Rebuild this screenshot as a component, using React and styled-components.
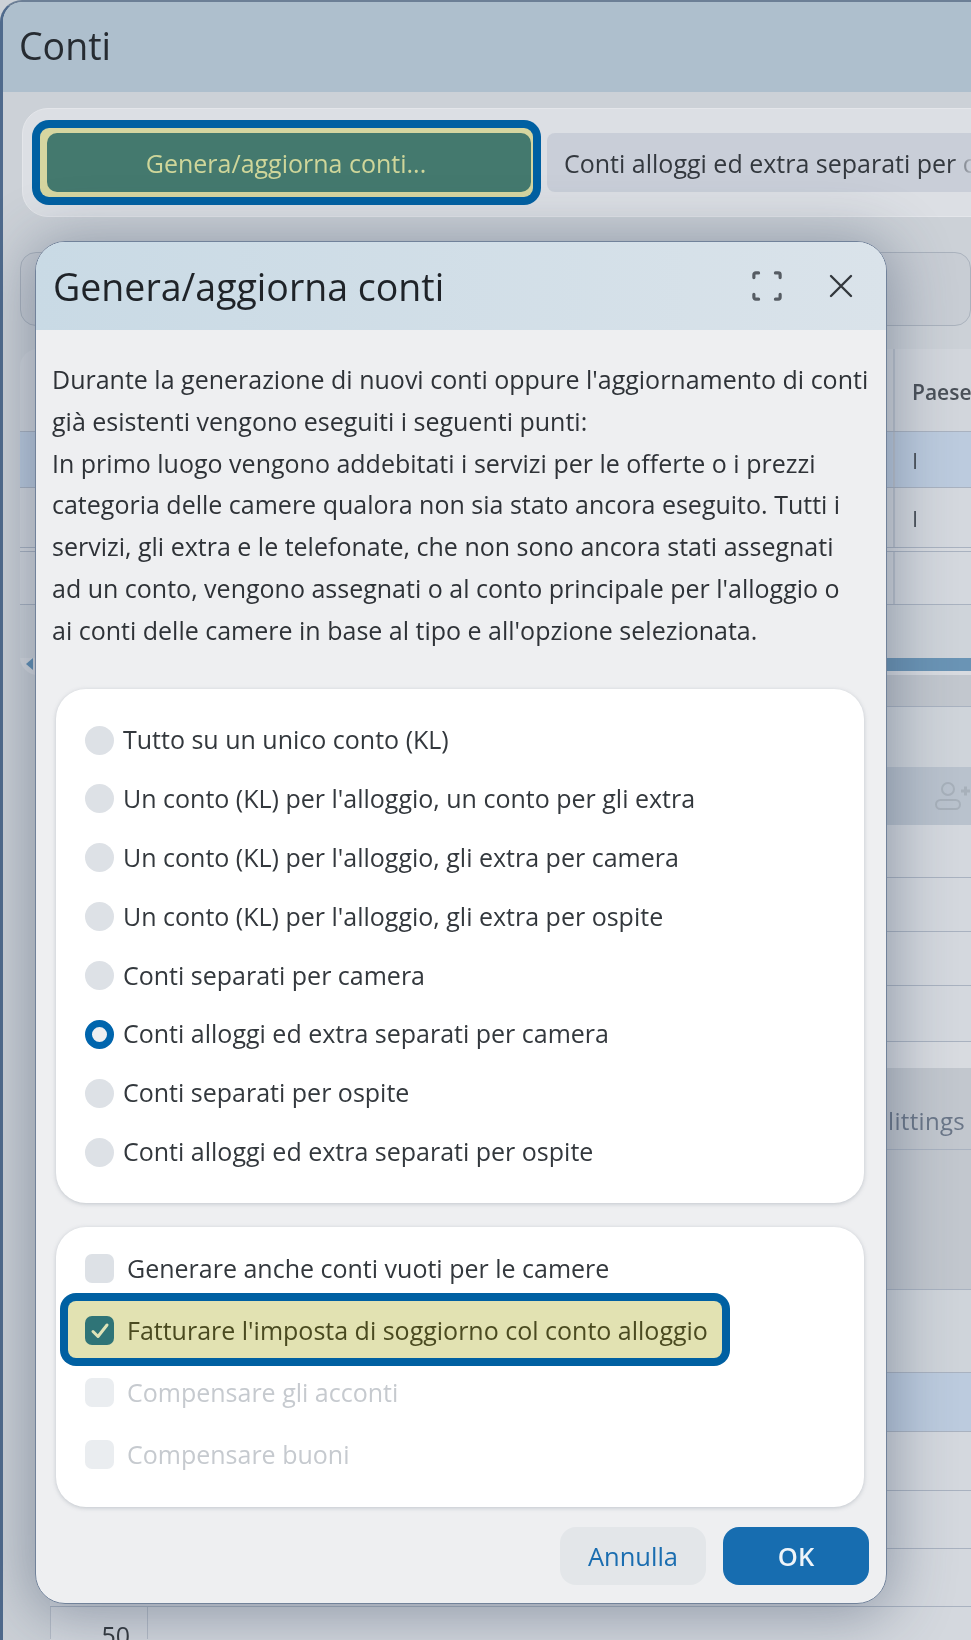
import React from 'react'
import styled, { createGlobalStyle } from 'styled-components'

const GlobalStyle = createGlobalStyle`
  html, body { margin: 0; padding: 0; background: #c8ced5; }
  body { font-family: "Open Sans", "Noto Sans", sans-serif; color: #33383d; }
`

const Page = styled.div`
  position: relative;
  width: 971px;
  height: 1640px;
  overflow: hidden;
  filter: blur(0.65px);
  background: #ccd1d7;
`

const Window = styled.div`
  height: 100%;
  border-left: 3px solid #4f6a8c;
  border-top: 2px solid #6c7f96;
  border-top-left-radius: 22px;
  box-sizing: border-box;
  display: flex;
  flex-direction: column;
  overflow: hidden;
`

const TitleBar = styled.div`
  height: 90px;
  flex: none;
  background: #aebfcd;
  display: flex;
  align-items: center;
  padding: 0 0 4px 16px;
  box-sizing: border-box;
  font-size: 37.5px;
  color: #262b31;
`

const Toolbar = styled.div`
  margin: 16px -40px 0 19px;
  height: 109px;
  flex: none;
  box-sizing: border-box;
  display: flex;
  align-items: center;
  gap: 14px;
  padding: 0 0 0 17px;
  background: #dcdfe4;
  border: 1px solid #e4e6ea;
  border-radius: 26px;
`

const TourRing = styled.div`
  flex: none;
  padding: 5px 2px 5px 7px;
  background: #d6d6a0;
  border-radius: 9px;
  box-shadow: 0 0 0 8px #0060a2;
`

const GenerateButton = styled.div`
  width: 484px;
  height: 59px;
  border-radius: 10px;
  background: #44796e;
  color: #cfd69a;
  font-size: 25px;
  display: flex;
  align-items: center;
  justify-content: center;
  padding: 0 6px 0 0;
  box-sizing: border-box;
`

const ModeButton = styled.div`
  flex: 1;
  height: 59px;
  border-radius: 8px;
  background: #c9ced8;
  display: flex;
  align-items: center;
  padding-left: 17px;
  font-size: 25px;
  white-space: nowrap;
  overflow: hidden;
  color: #33383e;
`

const ModeLabel = styled.span`
  width: 408px;
  overflow: hidden;
  flex: none;
  -webkit-mask-image: linear-gradient(to right, #000 95%, rgba(0,0,0,0.12));
`

const FilterCard = styled.div`
  margin: 35px 0 0 17px;
  height: 74px;
  flex: none;
  box-sizing: border-box;
  border: 1px solid #aab2bd;
  border-radius: 16px;
  background: #c8cdd4;
`

const TopTable = styled.div`
  margin: 23px 0 0 17px;
  flex: none;
  display: flex;
  flex-direction: column;
  border-radius: 18px 0 0 18px;
  overflow: hidden;
`

const LowerTable = styled.div`
  margin-left: 47px;
  flex: none;
  display: flex;
  flex-direction: column;
`

const tones = {
  head: '#d2d6dc',
  selected: '#bccbde',
  row: '#d4d8de',
  soft: '#cfd4da',
  dark: '#c2c7ce',
  band: '#b9c2cd',
  light: '#d8dbe0',
}

const Band = styled.div`
  height: ${(p) => p.$h}px;
  flex: none;
  box-sizing: border-box;
  background: ${(p) => tones[p.$tone]};
  border-bottom: 1px solid ${(p) => (p.$plain ? 'transparent' : '#a9b2c0')};
  display: flex;
  justify-content: flex-end;
  align-items: center;
`

const Cell = styled.div`
  width: 78px;
  height: 100%;
  box-sizing: border-box;
  border-left: 2px solid #bcc3cd;
  padding: ${(p) => (p.$head ? 4 : 0)}px 0 0 17px;
  display: flex;
  align-items: center;
  white-space: nowrap;
  font-size: ${(p) => (p.$head ? 21 : 22)}px;
  font-weight: ${(p) => (p.$head ? 600 : 400)};
  color: #4a5058;
`

const ScrollBand = styled.div`
  height: 17px;
  flex: none;
  background: #d8dbe0;
  display: flex;
  align-items: flex-start;
  padding-left: 6px;
`

const ScrollArrow = styled.span`
  width: 0;
  height: 0;
  flex: none;
  border-style: solid;
  border-width: 6px 7px 6px 0;
  border-color: transparent #5f8fb5 transparent transparent;
  margin-right: 40px;
`

const ScrollThumb = styled.div`
  flex: 1;
  height: 13px;
  background: #6a94b5;
`

const RowHint = styled.div`
  padding: 24px 6px 0 0;
  font-size: 24px;
  letter-spacing: 0.3px;
  color: #6a7688;
  white-space: nowrap;
`

const IconSlot = styled.div`
  width: 36px;
  flex: none;
  color: #a7b0ba;
  display: flex;
`

const IndexCell = styled.div`
  width: 98px;
  height: 100%;
  margin-right: auto;
  box-sizing: border-box;
  border-left: 1px solid #b5bcc7;
  border-right: 1px solid #b5bcc7;
  padding: 11px 17px 0 0;
  text-align: right;
  font-size: 25px;
  color: #33383d;
`

const DialogShadow = styled.div`
  position: absolute;
  left: 35px;
  top: 241px;
  width: 852px;
  height: 1363px;
  border-radius: 30px;
  box-shadow: 0 6px 60px 6px rgba(52, 68, 95, 0.42);
`

const Dialog = styled.div`
  position: absolute;
  left: 35px;
  top: 241px;
  width: 852px;
  height: 1363px;
  box-sizing: border-box;
  border: 1px solid #71829a;
  border-radius: 30px;
  overflow: hidden;
  display: flex;
  flex-direction: column;
  background: #eeeff1;
`

const DialogHeader = styled.div`
  height: 88px;
  flex: none;
  box-sizing: border-box;
  display: flex;
  align-items: center;
  padding: 0 33px 0 17px;
  background: linear-gradient(to right, #c9dae5, #dae3ea);
`

const DialogTitle = styled.div`
  flex: 1;
  font-size: 37.5px;
  color: #1f2328;
`

const HeaderIcons = styled.div`
  display: flex;
  align-items: center;
  gap: 47px;
`

const DialogBody = styled.div`
  flex: 1;
  display: flex;
  flex-direction: column;
  padding: 29px 22px 18px 20px;
`

const Intro = styled.p`
  margin: 0 -8px 37px -4px;
  font-size: 25px;
  line-height: 41.8px;
  color: #2e3237;
`

const OptionCard = styled.div`
  background: #fff;
  border-radius: 30px;
  box-shadow: 0 1px 4px rgba(110, 120, 135, 0.35);
  box-sizing: border-box;
  padding: ${(p) => p.$pad};
  margin-bottom: ${(p) => p.$gap}px;
`

const RadioRow = styled.div`
  height: 58.9px;
  display: flex;
  align-items: center;
  gap: 9px;
  font-size: 25px;
  color: #33383d;
`

const RadioDot = styled.span`
  width: 29px;
  height: 29px;
  margin-top: 2px;
  flex: none;
  box-sizing: border-box;
  border-radius: 50%;
  background: ${(p) => (p.$on ? '#eeeff1' : '#dde1e6')};
  border: ${(p) => (p.$on ? '7.5px solid #0065ad' : 'none')};
`

const CheckRow = styled.div`
  height: ${(p) => (p.$tour ? 57 : 62)}px;
  margin: ${(p) => (p.$tour ? '2.5px 0' : '0')};
  width: ${(p) => (p.$tour ? 'fit-content' : 'auto')};
  display: flex;
  align-items: center;
  gap: 13px;
  padding: 0 14px 0 17px;
  font-size: 25px;
  border-radius: 8px;
  color: ${(p) => (p.$tour ? '#4a4a20' : p.$off ? '#c6cacf' : '#33383d')};
  background: ${(p) => (p.$tour ? '#e2e2b2' : 'transparent')};
  box-shadow: ${(p) => (p.$tour ? '0 0 0 8px #0060a2' : 'none')};
`

const CheckBox = styled.span`
  width: 29px;
  height: 29px;
  margin-top: 2px;
  flex: none;
  border-radius: 7px;
  background: ${(p) => (p.$on ? '#2f7477' : p.$off ? '#eaedf0' : '#dde1e6')};
  display: flex;
  align-items: center;
  justify-content: center;
`

const Footer = styled.div`
  display: flex;
  justify-content: flex-end;
  gap: 17px;
  margin-right: -5px;
`

const FootButton = styled.div`
  width: 146px;
  height: 58px;
  border-radius: 16px;
  display: flex;
  align-items: center;
  justify-content: center;
  font-size: 25.5px;
  font-weight: ${(p) => (p.$primary ? 600 : 400)};
  background: ${(p) => (p.$primary ? '#176db0' : '#e3e6e9')};
  color: ${(p) => (p.$primary ? '#eef4f9' : '#1a6db0')};
`

const radios = [
  'Tutto su un unico conto (KL)',
  "Un conto (KL) per l'alloggio, un conto per gli extra",
  "Un conto (KL) per l'alloggio, gli extra per camera",
  "Un conto (KL) per l'alloggio, gli extra per ospite",
  'Conti separati per camera',
  'Conti alloggi ed extra separati per camera',
  'Conti separati per ospite',
  'Conti alloggi ed extra separati per ospite',
]

const ExpandIcon = () => (
  <svg width="30" height="30" viewBox="0 0 32 32" fill="none" stroke="#565c63" strokeWidth="3.4" strokeLinecap="round" strokeLinejoin="round">
    <path d="M2 7V4a2 2 0 0 1 2-2h3M25 2h3a2 2 0 0 1 2 2v3M30 25v3a2 2 0 0 1-2 2h-3M7 30H4a2 2 0 0 1-2-2v-3" />
  </svg>
)

const CloseIcon = () => (
  <svg width="24" height="24" viewBox="0 0 24 24" fill="none" stroke="#33383d" strokeWidth="2.4" strokeLinecap="round">
    <path d="M2 2l20 20M22 2L2 22" />
  </svg>
)

const CheckIcon = () => (
  <svg width="20" height="18" viewBox="0 0 20 18" fill="none" stroke="#dfe3b8" strokeWidth="3" strokeLinecap="round" strokeLinejoin="round">
    <path d="M3 9.5l5 5L17 3" />
  </svg>
)

const GuestIcon = () => (
  <svg width="36" height="30" viewBox="0 0 36 30" fill="none" stroke="currentColor" strokeWidth="2">
    <circle cx="13" cy="8" r="6" />
    <rect x="1" y="19" width="24" height="9" rx="4.5" />
    <path d="M26 10h9M30.5 5.500v9" strokeWidth="3" />
  </svg>
)

export default function App() {
  return (
    <Page>
      <GlobalStyle />
      <Window>
        <TitleBar>Conti</TitleBar>
        <Toolbar>
          <TourRing>
            <GenerateButton>Genera/aggiorna conti...</GenerateButton>
          </TourRing>
          <ModeButton>
            <ModeLabel>Conti alloggi ed extra separati per camera</ModeLabel>
          </ModeButton>
        </Toolbar>
        <FilterCard />
        <TopTable>
          <Band $h={83} $tone="head"><Cell $head>Paese</Cell></Band>
          <Band $h={56} $tone="selected"><Cell>I</Cell></Band>
          <Band $h={60} $tone="row"><Cell>I</Cell></Band>
          <Band $h={4} $tone="light" />
          <Band $h={53} $tone="row"><Cell /></Band>
          <Band $h={53} $tone="soft" $plain />
          <ScrollBand>
            <ScrollArrow />
            <ScrollThumb />
          </ScrollBand>
        </TopTable>
        <LowerTable>
          <Band $h={32} $tone="dark" />
          <Band $h={60} $tone="soft" $plain />
          <Band $h={58} $tone="band" $plain><IconSlot><GuestIcon /></IconSlot></Band>
          <Band $h={53} $tone="row" />
          <Band $h={54} $tone="row" />
          <Band $h={54} $tone="row" />
          <Band $h={56} $tone="row" />
          <Band $h={26} $tone="light" $plain />
          <Band $h={82} $tone="dark"><RowHint>Splittings</RowHint></Band>
          <Band $h={140} $tone="dark" />
          <Band $h={83} $tone="soft" />
          <Band $h={59} $tone="selected" />
          <Band $h={59} $tone="row" />
          <Band $h={58} $tone="row" />
          <Band $h={58} $tone="row" />
          <Band $h={33} $tone="row" $plain><IndexCell>50</IndexCell></Band>
        </LowerTable>
      </Window>
      <DialogShadow />
      <Dialog>
        <DialogHeader>
          <DialogTitle>Genera/aggiorna conti</DialogTitle>
          <HeaderIcons>
            <ExpandIcon />
            <CloseIcon />
          </HeaderIcons>
        </DialogHeader>
        <DialogBody>
          <Intro>
            Durante la generazione di nuovi conti oppure l'aggiornamento di conti già esistenti vengono eseguiti i seguenti punti:
            <br />
            In primo luogo vengono addebitati i servizi per le offerte o i prezzi categoria delle camere qualora non sia stato ancora eseguito. Tutti i servizi, gli extra e le telefonate, che non sono ancora stati assegnati ad{'\u00a0'}un conto, vengono assegnati o al conto principale per l'alloggio o ai{'\u00a0'}conti delle camere in base al tipo e all'opzione selezionata.
          </Intro>
          <OptionCard $pad="21px 0 22px 29px" $gap={24}>
            {radios.map((label, i) => (
              <RadioRow key={label}>
                <RadioDot $on={i === 5} />
                {label}
              </RadioRow>
            ))}
          </OptionCard>
          <OptionCard $pad="10px 0 22px 12px" $gap={20}>
            <CheckRow>
              <CheckBox />
              Generare anche conti vuoti per le camere
            </CheckRow>
            <CheckRow $tour>
              <CheckBox $on><CheckIcon /></CheckBox>
              Fatturare l'imposta di soggiorno col conto alloggio
            </CheckRow>
            <CheckRow $off>
              <CheckBox $off />
              Compensare gli acconti
            </CheckRow>
            <CheckRow $off>
              <CheckBox $off />
              Compensare buoni
            </CheckRow>
          </OptionCard>
          <Footer>
            <FootButton>Annulla</FootButton>
            <FootButton $primary>OK</FootButton>
          </Footer>
        </DialogBody>
      </Dialog>
    </Page>
  )
}
